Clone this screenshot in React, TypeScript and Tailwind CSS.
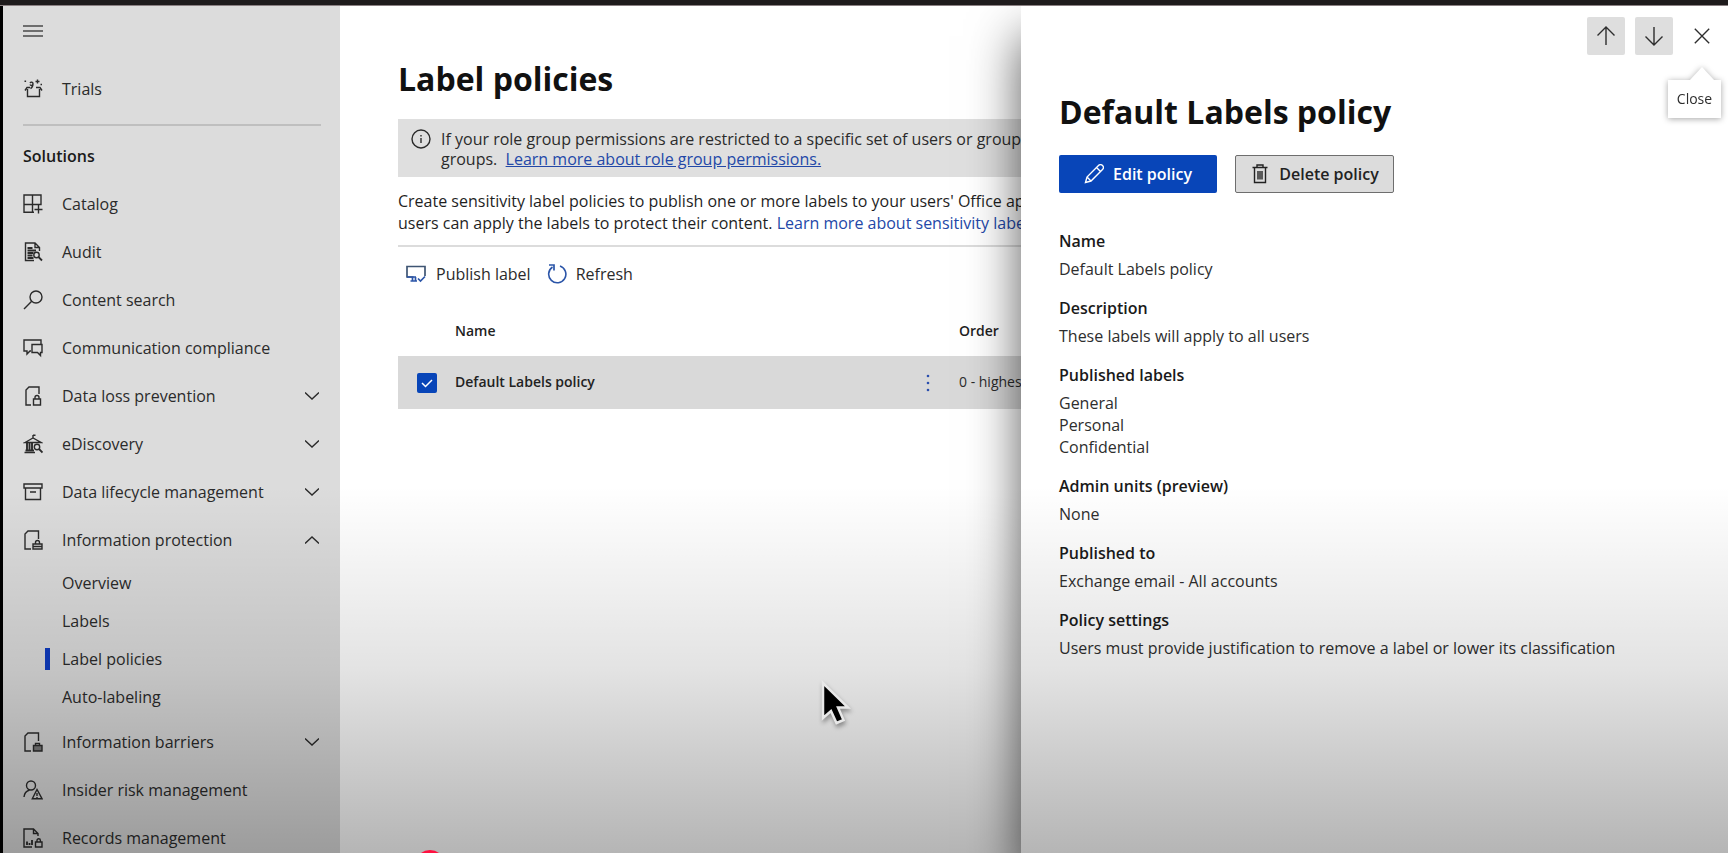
import type { ReactNode } from "react";

function Icon({ children, size = 20, className = "" }: { children: ReactNode; size?: number; className?: string }) {
  return (
    <svg
      width={size}
      height={size}
      viewBox="0 0 20 20"
      fill="none"
      stroke="currentColor"
      strokeWidth="1.4"
      aria-hidden="true"
      className={`shrink-0 ${className}`}
    >
      {children}
    </svg>
  );
}

const icons = {
  trials: (
    <Icon>
      <path d="M4.500 10v7.500h12V10M2 11.500l2-3h3M19 11.500l-2-3h-4" />
      <path d="M7 4c1-1.500 3-.8 3 .8S7.800 7 7 5.500M10 4.700c0 2-.2 3.500-2.500 5M12.500 2.500h4M14.500.500v4" />
      <path d="M1.500 2.200h1.600M17.500 5.500H19" strokeWidth="1.600" />
    </Icon>
  ),
  catalog: (
    <Icon>
      <path d="M11 18.300H1V1h17v9.500H1M9.500 1v17.300M15.500 11v8.500M11.500 15.500h8" />
    </Icon>
  ),
  audit: (
    <Icon>
      <path d="M11 18.500H2.500V1H12l4.500 4.500V9M12 1v4.500h4.500" />
      <path d="M4.500 6h5M4.500 8.500H13M4.500 11h6M4.500 13.500h5M4.500 16h6" strokeWidth="2" />
      <circle cx="13.500" cy="13" r="2.700" />
      <path d="m15.500 15 3.500 3.500" strokeWidth="1.800" />
    </Icon>
  ),
  search: (
    <Icon>
      <circle cx="13" cy="7" r="6" />
      <path d="M8.700 11.300 1 19" />
    </Icon>
  ),
  comms: (
    <Icon>
      <path d="M8 13H7l-3 3v-3H1V2h17v4" />
      <path d="M9 6.500h10v8h-1.500v3l-3-3H9z" />
    </Icon>
  ),
  dlp: (
    <Icon>
      <path d="M8 19H3V4l3-3h10v7" />
      <path d="M10.500 13h7v6h-7zM12 13v-1.500a2 2 0 0 1 4 0V13" />
    </Icon>
  ),
  ediscovery: (
    <Icon>
      <path d="M10 1v3M10 1.200h2.500M2 8.500l8-4.500 8 4.500zM1.500 18.500H12" />
      <path d="M4 9v8M6.500 9v8M9 9v8M2.500 16.500H11" strokeWidth="1.900" />
      <circle cx="14" cy="13" r="2.700" />
      <path d="m16 15 3.500 3.500" strokeWidth="1.800" />
    </Icon>
  ),
  lifecycle: (
    <Icon>
      <path d="M1 2h18v4H1zM2.500 6v11.500h15V6M7 10h6" />
    </Icon>
  ),
  protection: (
    <Icon>
      <path d="M8 19H2V4l3-3h10.500v8" />
      <path d="M10 14h9v5h-9zM12.500 14v-1.500a2 2 0 0 1 4 0V14M10 16.500h9" />
    </Icon>
  ),
  barriers: (
    <Icon>
      <path d="M8 19H2V4l3-3h10.500v8" />
      <path d="M10.500 13.500H19V19h-8.500z" fill="currentColor" fillOpacity=".55" />
      <path d="M12.500 13v-1.500h4V13" />
    </Icon>
  ),
  insider: (
    <Icon>
      <circle cx="8" cy="5.500" r="4.500" />
      <path d="M1 17c.3-3.500 2.500-6 5.500-7" />
      <path d="m14 9.500-4.700 9.200h9.700zM14 13v3M14 17v1" />
    </Icon>
  ),
  records: (
    <Icon>
      <path d="M9 19H1V1h9.500L15 5.500V8M10.500 1v4.500H15" />
      <path d="M4 13.500V17M6.500 15v2M9 12v5" strokeWidth="1.800" />
      <path d="M12.500 14H19v5h-6.500zM14 14v-1.500a1.700 1.700 0 0 1 3.400 0V14" />
    </Icon>
  ),
};

type Item = { label: string; icon: ReactNode; expand?: "down" | "up" };

const upper: Item[] = [
  { label: "Catalog", icon: icons.catalog },
  { label: "Audit", icon: icons.audit },
  { label: "Content search", icon: icons.search },
  { label: "Communication compliance", icon: icons.comms },
  { label: "Data loss prevention", icon: icons.dlp, expand: "down" },
  { label: "eDiscovery", icon: icons.ediscovery, expand: "down" },
  { label: "Data lifecycle management", icon: icons.lifecycle, expand: "down" },
  { label: "Information protection", icon: icons.protection, expand: "up" },
];

const subItems = ["Overview", "Labels", "Label policies", "Auto-labeling"];

const lower: Item[] = [
  { label: "Information barriers", icon: icons.barriers, expand: "down" },
  { label: "Insider risk management", icon: icons.insider },
  { label: "Records management", icon: icons.records },
];

function NavRow({ item }: { item: Item }) {
  const body = (
    <>
      {item.icon}
      <span>{item.label}</span>
      {item.expand && (
        <svg width="14" height="8" viewBox="0 0 14 8" fill="none" stroke="currentColor" strokeWidth="1.400" className="ml-auto" aria-hidden="true">
          <path d={item.expand === "down" ? "M0 .5l7 6.500 7-6.500" : "M0 7.500 7 1l7 6.500"} />
        </svg>
      )}
    </>
  );
  const cls = "flex h-12 w-full items-center gap-[19px] pr-[21px] pl-5 text-left";
  return (
    <li>
      {item.expand ? (
        <button type="button" aria-expanded={item.expand === "up"} className={cls}>{body}</button>
      ) : (
        <a href="#" className={cls}>{body}</a>
      )}
    </li>
  );
}

function Sidebar() {
  return (
    <nav aria-label="Solutions" className="w-[337px] shrink-0 overflow-hidden bg-[#dcdcdc] text-base text-[#2b2b2b]">
      <button type="button" aria-label="Toggle navigation" className="flex h-[59px] items-start px-5 pt-[19px]">
        <svg width="20" height="12" viewBox="0 0 20 12" stroke="#4a4a4a" strokeWidth="1.500" aria-hidden="true">
          <path d="M0 1h20M0 6h20M0 11h20" />
        </svg>
      </button>
      <ul>
        <NavRow item={{ label: "Trials", icon: icons.trials }} />
      </ul>
      <hr className="mt-[11px] mr-[19px] ml-5 border-t-2 border-[#bfbfbf]" />
      <h2 className="mt-[18px] ml-5 h-9 font-semibold text-[#1a1a1a] leading-6">Solutions</h2>
      <ul>
        {upper.map((i) => <NavRow key={i.label} item={i} />)}
        <li>
          <ul className="pb-0.5">
            {subItems.map((s) => (
              <li key={s} className="flex h-[38px] items-center pl-[42px]">
                <span className={s === "Label policies" ? "h-[22px] w-[5px] bg-[#0f3cc0]" : "h-[22px] w-[5px]"} />
                <a href="#" className="pl-3">{s}</a>
              </li>
            ))}
          </ul>
        </li>
        {lower.map((i) => <NavRow key={i.label} item={i} />)}
      </ul>
    </nav>
  );
}

function PoliciesPage() {
  return (
    <main className="min-w-0 flex-1 overflow-hidden pt-12 pl-[58px] text-base whitespace-nowrap text-[#2b2b2b]">
      <h1 className="text-[32px] leading-[50px] font-bold text-[#111]">Label policies</h1>
      <div className="mt-[15px] flex h-[58px] gap-[10px] bg-[#dfdfdf] pt-[10px] pl-[13px]">
        <Icon>
          <circle cx="10" cy="10" r="9" />
          <path d="M10 9v5M10 6v1.500" />
        </Icon>
        <p className="leading-5">
          If your role group permissions are restricted to a specific set of users or groups,
          <br />
          groups. &nbsp;<a href="#" className="text-[#2348a8] underline">Learn more about role group permissions.</a>
        </p>
      </div>
      <p className="mt-[13px] leading-[22px] text-[#1f1f1f]">
        Create sensitivity label policies to publish one or more labels to your users' Office apps
        <br />
        users can apply the labels to protect their content. <a href="#" className="text-[#2348a8]">Learn more about sensitivity labels</a>
      </p>
      <hr className="mt-[11px] border-t-2 border-[#dcdcdc]" />
      <div className="flex h-[54px] items-center gap-4 pl-2">
        <button type="button" className="flex items-center gap-[10px]">
          <Icon className="text-[#2b55a8]">
            <path d="M7.500 13H1V2.500h18V12" stroke="#3f5573" strokeWidth="1.700" />
            <path d="M1 13h9M6.500 13v4M9.500 13v4M4.500 17H11M12 14.500l2.500 2.500 4.500-4.500" strokeWidth="1.700" />
          </Icon>
          Publish label
        </button>
        <button type="button" className="flex items-center gap-[9px]">
          <Icon className="text-[#2b55a8]">
            <path d="M13 2a8.600 8.600 0 1 1-7.500 1" strokeWidth="1.600" />
            <path d="M2 1h5v5.500" strokeWidth="1.700" />
          </Icon>
          Refresh
        </button>
      </div>
      <table className="mt-[5px] w-full table-fixed text-left text-sm">
        <thead>
          <tr className="h-[50px] text-[#1f1f1f]">
            <th scope="col" className="w-[57px]" aria-label="Select" />
            <th scope="col" className="w-[463px] font-semibold">Name</th>
            <th scope="col" className="w-[41px]" aria-label="Actions" />
            <th scope="col" className="font-semibold">Order</th>
          </tr>
        </thead>
        <tbody>
          <tr className="h-[53px] bg-[#d9d9d9]">
            <td className="pl-[19px]">
              <label className="relative block size-5">
                <input type="checkbox" defaultChecked aria-label="Select Default Labels policy" className="block size-5 appearance-none rounded-xs bg-[#0845b8]" />
                <svg viewBox="0 0 20 20" fill="none" stroke="#fff" strokeWidth="1.500" aria-hidden="true" className="pointer-events-none absolute inset-0">
                  <path d="m5 10 3.500 3.500L15 7" />
                </svg>
              </label>
            </td>
            <td className="pb-0.5 font-semibold text-[#222]">Default Labels policy</td>
            <td>
              <button type="button" aria-label="More actions" className="block px-2 text-[#2b4fae]">
                <svg width="4" height="18" viewBox="0 0 4 18" fill="currentColor" aria-hidden="true">
                  <circle cx="2" cy="2" r="1.300" /><circle cx="2" cy="9" r="1.300" /><circle cx="2" cy="16" r="1.300" />
                </svg>
              </button>
            </td>
            <td className="pb-0.5">0 - highest</td>
          </tr>
        </tbody>
      </table>
    </main>
  );
}

const details: [string, string[]][] = [
  ["Name", ["Default Labels policy"]],
  ["Description", ["These labels will apply to all users"]],
  ["Published labels", ["General", "Personal", "Confidential"]],
  ["Admin units (preview)", ["None"]],
  ["Published to", ["Exchange email - All accounts"]],
  ["Policy settings", ["Users must provide justification to remove a label or lower its classification"]],
];

function DetailsPanel() {
  return (
    <aside aria-label="Policy details" className="absolute inset-y-0 right-0 w-[707px] bg-white pl-[38px] text-base text-[#2e2e2e] shadow-[0_30px_48px_rgba(0,0,0,0.65)]">
      <div className="flex justify-end gap-[10px] pt-[11px] pr-[7px]">
        <button type="button" aria-label="Previous" className="flex size-[38px] items-center justify-center rounded-xs bg-[#dedede]">
          <Icon><path d="M10 1v18M1.500 9.500 10 1l8.500 8.500" /></Icon>
        </button>
        <button type="button" aria-label="Next" className="flex size-[38px] items-center justify-center rounded-xs bg-[#dedede]">
          <Icon><path d="M10 1v18M1.500 10.500 10 19l8.500-8.500" /></Icon>
        </button>
        <div className="relative">
          <button type="button" aria-label="Close" className="flex size-[38px] items-center justify-center">
            <Icon size={16}><path d="m1 1 18 18M19 1 1 19" strokeWidth="1.700" /></Icon>
          </button>
          <div role="tooltip" className="absolute top-[63px] right-0 flex h-[38px] w-[53px] items-center justify-center bg-white text-sm drop-shadow-[0_1px_3px_rgba(0,0,0,0.35)]">
            <svg width="26" height="14" viewBox="0 0 26 14" fill="#fff" aria-hidden="true" className="absolute -top-[13px] right-[6px]">
              <path d="M13 0 26 14H0z" />
            </svg>
            Close
          </div>
        </div>
      </div>
      <h2 className="mt-8 text-[32px] leading-[50px] font-bold text-[#111]">Default Labels policy</h2>
      <div className="mt-[18px] flex gap-[18px] font-semibold">
        <button type="button" className="flex h-[38px] w-[158px] items-center justify-center gap-[9px] rounded-xs bg-[#0845b8] text-white">
          <Icon><path d="m1.500 18.500 1.500-5.500L14.500 1.500a2 2 0 0 1 4 4L7 17zM12.500 3.500l4 4M3 13l4 4" /></Icon>
          Edit policy
        </button>
        <button type="button" className="flex h-[38px] w-[159px] items-center justify-center gap-[9px] rounded-xs border border-[#6e6e6e] bg-[#dcdcdc] text-[#222]">
          <Icon><path d="M2.500 3.500h15M7 3.500V1h6v2.500M4.500 3.500V18.500h11V3.500M8 7V15.500M10 7V15.500M12 7V15.500" /></Icon>
          Delete policy
        </button>
      </div>
      <dl className="mt-[37px] flex flex-col gap-[17px] leading-[22px]">
        {details.map(([term, values]) => (
          <div key={term}>
            <dt className="mb-[6px] font-semibold text-[#1a1a1a]">{term}</dt>
            {values.map((v) => <dd key={v}>{v}</dd>)}
          </div>
        ))}
      </dl>
    </aside>
  );
}

export default function App() {
  return (
    <div className="relative flex h-screen flex-col overflow-hidden bg-white font-['Open_Sans','Noto_Sans',sans-serif]">
      <div className="h-[6px] shrink-0 border-b border-[#8a8082] bg-[#1e1b1c]" />
      <div className="relative flex min-h-0 flex-1 overflow-hidden border-l-[3px] border-black">
        <Sidebar />
        <PoliciesPage />
        <DetailsPanel />
      </div>
      <div className="pointer-events-none absolute inset-x-0 bottom-0 h-[43%] bg-linear-to-b from-transparent via-black/11 to-black/29" />
      <svg width="34" height="50" viewBox="0 0 34 50" aria-hidden="true" className="pointer-events-none absolute top-[679px] left-[819px] drop-shadow-[1px_3px_2px_rgba(0,0,0,0.35)]">
        <path d="M4 4v35l8-7 5.500 12 7-3L19 28.500h10z" fill="#000" stroke="#e8e8e8" strokeWidth="2.500" />
      </svg>
      <div className="pointer-events-none absolute -bottom-[27px] left-[415px] size-[30px] rounded-full bg-[#ff1040]" />
    </div>
  );
}
